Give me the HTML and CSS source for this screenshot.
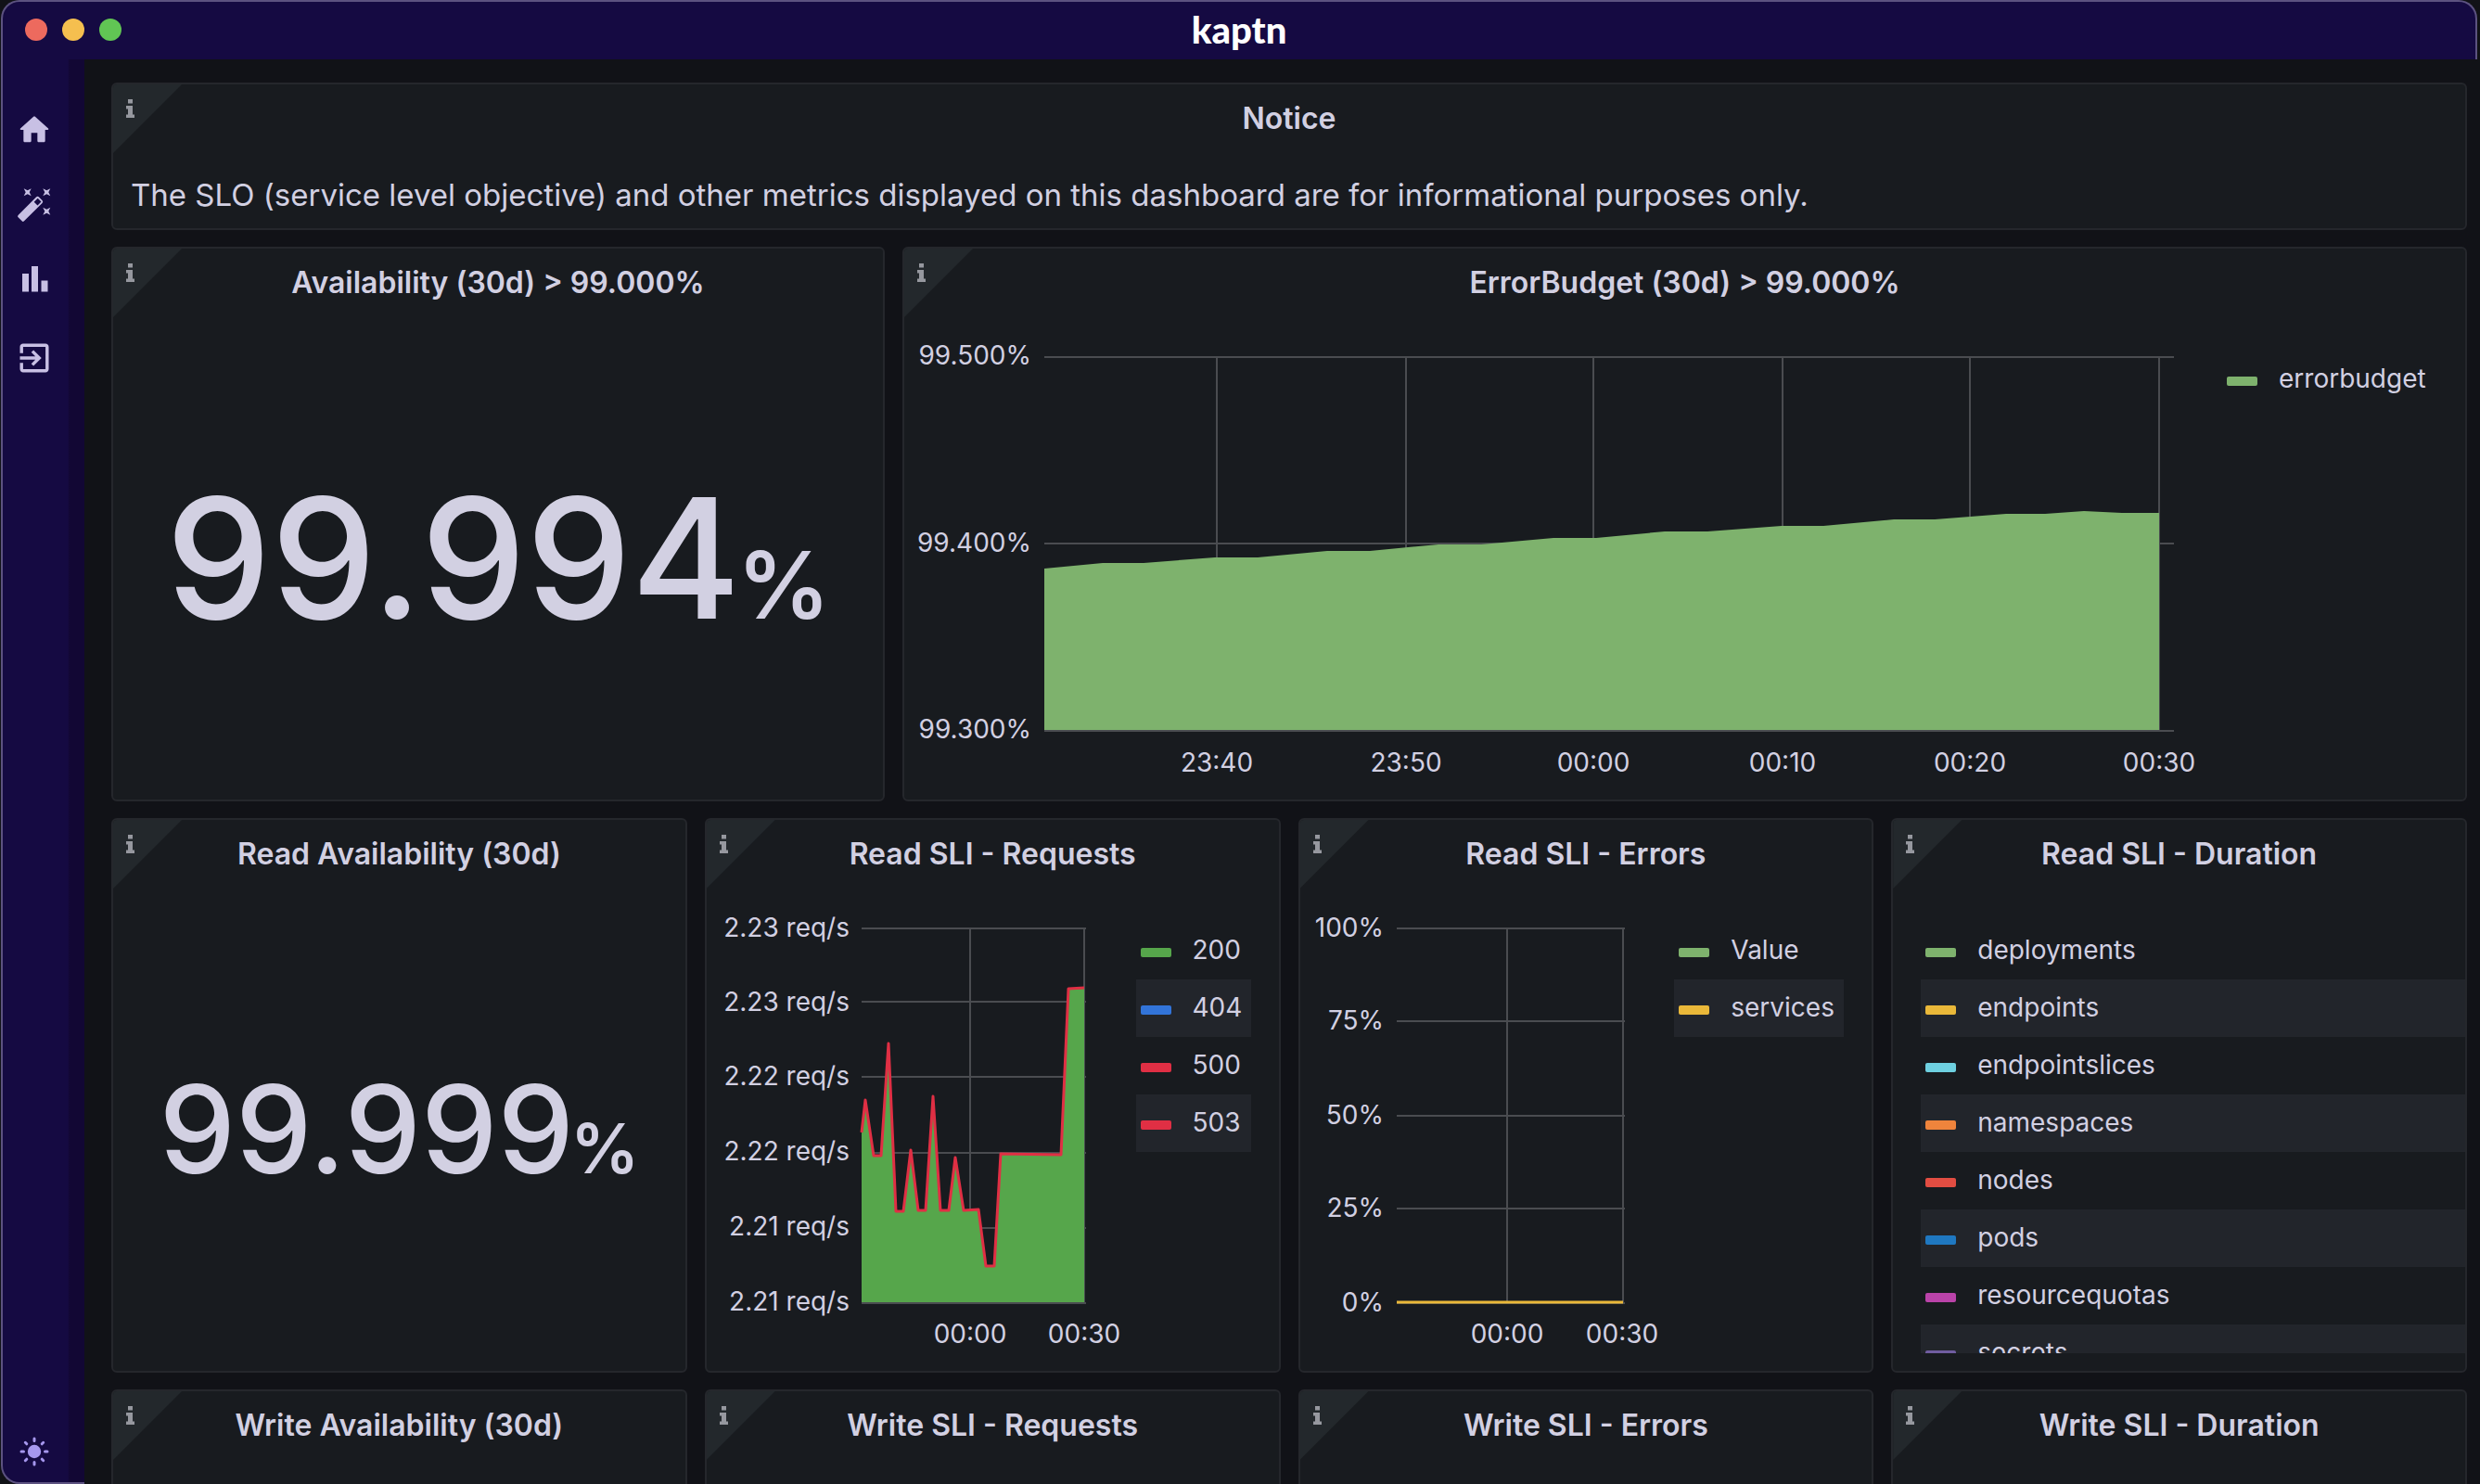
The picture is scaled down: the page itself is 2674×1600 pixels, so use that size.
FILE: index.html
```html
<!DOCTYPE html>
<html lang="en">
<head>
<meta charset="utf-8">
<meta name="viewport" content="width=device-width, initial-scale=1">
<title>kaptn</title>
<link rel="stylesheet" href="styles.css">
</head>
<body>
<svg class="sprite" aria-hidden="true">
  <symbol id="info" viewBox="0 0 9 20"><path d="M2 0h5v4.500H2zM0 7h7v9.500h2V20H0v-3.500h2v-6H0z"/></symbol>
</svg>
<div class="window">
  <header class="titlebar">
    <div class="lights">
      <button class="light close" aria-label="Close"></button>
      <button class="light minimize" aria-label="Minimize"></button>
      <button class="light zoom" aria-label="Zoom"></button>
    </div>
    <h1 class="brand">kaptn</h1>
  </header>

  <div class="frame">
    <nav class="sidebar" aria-label="Main">
      <div class="nav-links">
        <a class="nav-link" href="#home" aria-label="Home">
          <svg viewBox="0 0 24 24"><path d="M10 19v-5h4v5c0 .55.45 1 1 1h3c.55 0 1-.45 1-1v-7h1.700c.46 0 .68-.57.33-.87L12.670 3.600c-.38-.34-.96-.34-1.340 0l-8.360 7.530c-.34.3-.13.87.33.87H5v7c0 .55.45 1 1 1h3c.55 0 1-.45 1-1z"/></svg>
        </a>
        <a class="nav-link" href="#deploy" aria-label="Magic wand">
          <svg viewBox="0 2 40 40">
            <path fill-rule="evenodd" d="M22 12.500q1.500-1.500 3 0l3.500 3.500q1.500 1.500 0 3L9 38.300q-1.200 1.200-2.400 0l-4-4q-1.200-1.200 0-2.400zM23.700 13.700l-4 4 3.800 3.800 4-4z"/>
            <path d="M8.700 3.200l4 2 4-2-2 4 2 4-4-2-4 2 2-4zM29.300 3.200l4 2 4-2-2 4 2 4-4-2-4 2 2-4zM29.300 23.700l4 2 4-2-2 4 2 4-4-2-4 2 2-4z"/>
          </svg>
        </a>
        <a class="nav-link" href="#metrics" aria-label="Metrics">
          <svg viewBox="0 0 40 40"><path d="M7 11h7v19.500H7zM17 3h7v27.500h-7zM27.500 18.500h7v12h-7z"/></svg>
        </a>
        <a class="nav-link" href="#exit" aria-label="Exit">
          <svg viewBox="0.400 0.400 23.200 23.200"><path d="M10.090 15.590 11.500 17l5-5-5-5-1.410 1.410L12.670 11H3v2h9.670l-2.580 2.590zM19 3H5c-1.110 0-2 .9-2 2v4h2V5h14v14H5v-4H3v4c0 1.100.89 2 2 2h14c1.100 0 2-.9 2-2V5c0-1.100-.9-2-2-2z"/></svg>
        </a>
      </div>
      <button class="theme" aria-label="Toggle theme">
        <svg viewBox="-20 -20 40 40">
          <circle r="7.200"/>
          <path d="M0-14v2.500M0 11.500V14M-14 0h2.500M11.500 0H14M-9.700-9.700l1.500 1.500M8.200 8.200l1.500 1.500M-9.700 9.700l1.500-1.500M8.200-8.200l1.500-1.500"/>
        </svg>
      </button>
    </nav>

    <main class="dashboard">
      <section class="panel span-full notice">
        <span class="corner"><svg><use href="#info"/></svg></span>
        <h2 class="title">Notice</h2>
        <p class="notice-text">The SLO (service level objective) and other metrics displayed on this dashboard are for informational purposes only.</p>
      </section>

      <section class="panel span-third">
        <span class="corner"><svg><use href="#info"/></svg></span>
        <h2 class="title">Availability (30d) &gt; 99.000%</h2>
        <div class="body stat stat-large">99.994<span class="unit">%</span></div>
      </section>

      <section class="panel span-two-thirds">
        <span class="corner"><svg><use href="#info"/></svg></span>
        <h2 class="title">ErrorBudget (30d) &gt; 99.000%</h2>
        <div class="body">
          <svg class="chart" viewBox="0 0 1410 518" preserveAspectRatio="xMinYMin">
            <path class="grid" d="M151 41H1369M151 242H1369M151 444H1369M337 41V444M541 41V444M743 41V444M947 41V444M1149 41V444M1353 41V444"/>
            <path class="area budget" d="M151 269L214 263H258L335 257H381L456 250H502L576 243H622L700 236H746L820 229H866L946 223H991L1067 216H1111L1188 210H1230L1272 207L1313 209H1353V443H151z"/>
            <g class="y-labels">
              <text x="137" y="49">99.500%</text><text x="137" y="251">99.400%</text><text x="137" y="452">99.300%</text>
            </g>
            <g class="x-labels">
              <text x="337" y="488">23:40</text><text x="541" y="488">23:50</text><text x="743" y="488">00:00</text><text x="947" y="488">00:10</text><text x="1149" y="488">00:20</text><text x="1353" y="488">00:30</text>
            </g>
          </svg>
          <ul class="legend legend-budget">
            <li><i class="swatch green"></i>errorbudget</li>
          </ul>
        </div>
      </section>

      <section class="panel">
        <span class="corner"><svg><use href="#info"/></svg></span>
        <h2 class="title">Read Availability (30d)</h2>
        <div class="body stat">99.999<span class="unit">%</span></div>
      </section>

      <section class="panel">
        <span class="corner"><svg><use href="#info"/></svg></span>
        <h2 class="title">Read SLI - Requests</h2>
        <div class="body">
          <svg class="chart" viewBox="0 0 460 518" preserveAspectRatio="xMinYMin">
            <path class="grid" d="M167 41H409M167 120H409M167 201H409M167 283H409M167 364H409M167 445H409M284 41V445M407 41V445"/>
            <path class="area requests" d="M167 261L171 226L180 286H188L196 165L204 346H212L220 280L228 345H236L244 222L252 345H261L268 288L277 345L293 344L301 405H310L317 284L382 285L390 106L407 105V444H167z"/>
            <path class="line errors" d="M167 261L171 226L180 286H188L196 165L204 346H212L220 280L228 345H236L244 222L252 345H261L268 288L277 345L293 344L301 405H310L317 284L382 285L390 106L407 105"/>
            <g class="y-labels">
              <text x="154" y="50">2.23 req/s</text><text x="154" y="130">2.23 req/s</text><text x="154" y="210">2.22 req/s</text><text x="154" y="291">2.22 req/s</text><text x="154" y="372">2.21 req/s</text><text x="154" y="453">2.21 req/s</text>
            </g>
            <g class="x-labels"><text x="284" y="488">00:00</text><text x="407" y="488">00:30</text></g>
          </svg>
          <ul class="legend legend-codes">
            <li><i class="swatch leaf"></i>200</li>
            <li><i class="swatch blue"></i>404</li>
            <li><i class="swatch crimson"></i>500</li>
            <li><i class="swatch crimson"></i>503</li>
          </ul>
        </div>
      </section>

      <section class="panel">
        <span class="corner"><svg><use href="#info"/></svg></span>
        <h2 class="title">Read SLI - Errors</h2>
        <div class="body">
          <svg class="chart" viewBox="0 0 400 518" preserveAspectRatio="xMinYMin">
            <path class="grid" d="M104 41H350M104 141H350M104 243H350M104 343H350M104 445H350M223 41V445M348 41V445"/>
            <path class="line services" d="M104 444H348"/>
            <g class="y-labels">
              <text x="90" y="50">100%</text><text x="90" y="150">75%</text><text x="90" y="252">50%</text><text x="90" y="352">25%</text><text x="90" y="454">0%</text>
            </g>
            <g class="x-labels"><text x="223" y="488">00:00</text><text x="347" y="488">00:30</text></g>
          </svg>
          <ul class="legend legend-services">
            <li><i class="swatch green"></i>Value</li>
            <li><i class="swatch yellow"></i>services</li>
          </ul>
        </div>
      </section>

      <section class="panel">
        <span class="corner"><svg><use href="#info"/></svg></span>
        <h2 class="title">Read SLI - Duration</h2>
        <div class="body">
          <ul class="legend legend-full">
            <li><i class="swatch green"></i>deployments</li>
            <li><i class="swatch yellow"></i>endpoints</li>
            <li><i class="swatch cyan"></i>endpointslices</li>
            <li><i class="swatch orange"></i>namespaces</li>
            <li><i class="swatch red"></i>nodes</li>
            <li><i class="swatch azure"></i>pods</li>
            <li><i class="swatch magenta"></i>resourcequotas</li>
            <li><i class="swatch violet"></i>secrets</li>
          </ul>
        </div>
      </section>

      <section class="panel">
        <span class="corner"><svg><use href="#info"/></svg></span>
        <h2 class="title">Write Availability (30d)</h2>
      </section>
      <section class="panel">
        <span class="corner"><svg><use href="#info"/></svg></span>
        <h2 class="title">Write SLI - Requests</h2>
      </section>
      <section class="panel">
        <span class="corner"><svg><use href="#info"/></svg></span>
        <h2 class="title">Write SLI - Errors</h2>
      </section>
      <section class="panel">
        <span class="corner"><svg><use href="#info"/></svg></span>
        <h2 class="title">Write SLI - Duration</h2>
      </section>
    </main>
  </div>
</div>
</body>
</html>
```
FILE: styles.css
```css
:root {
  --navy: #150a42;
  --edge: #5c5280;
  --canvas: #111217;
  --panel: #181b1f;
  --line: #25272c;
  --text: #d2d0e2;
}

* { box-sizing: border-box; }

body {
  margin: 0;
  background: var(--canvas);
  color: var(--text);
  font-family: Inter, "Liberation Sans", sans-serif;
  font-size: 28px;
}

h1, h2, p, ul { margin: 0; padding: 0; }

button { padding: 0; border: 0; background: none; }

.sprite { display: none; }

.window {
  display: flex;
  flex-direction: column;
  height: 100vh;
  overflow: hidden;
}

/* Title bar */
.titlebar {
  display: grid;
  grid-template-columns: 1fr auto 1fr;
  align-items: center;
  flex: none;
  height: 64px;
  margin: 0 3px 0 1px;
  padding: 0 24px 2px;
  border: 2px solid var(--edge);
  border-bottom: 0;
  border-radius: 20px 20px 0 0;
  background: var(--navy);
}

.lights { display: flex; gap: 16px; }

.light {
  width: 24px;
  height: 24px;
  border-radius: 50%;
}

.close { background: #ed6a5e; }
.minimize { background: #f5bf4f; }
.zoom { background: #61c554; }

.brand {
  color: #fff;
  font-family: Lato, sans-serif;
  font-size: 40px;
  font-weight: 900;
  line-height: 60px;
}

/* Sidebar */
.frame {
  display: flex;
  flex: 1;
  min-height: 0;
}

.sidebar {
  display: flex;
  flex-direction: column;
  justify-content: space-between;
  flex: none;
  width: 90px;
  margin-left: 1px;
  padding: 56px 0 13px 14px;
  border: 2px solid var(--edge);
  border-width: 0 0 2px 2px;
  border-bottom-left-radius: 20px;
  background: linear-gradient(to right, var(--navy) 70px, #120734 72px);
}

.nav-links {
  display: flex;
  flex-direction: column;
  gap: 42px;
}

.nav-link, .theme { width: 40px; height: 40px; }

.nav-link svg, .theme svg {
  display: block;
  width: 40px;
  height: 40px;
}

.nav-link svg { fill: #c8c0e4; }

.theme svg {
  fill: #a697ee;
  stroke: none;
}

.theme path {
  fill: none;
  stroke: #a697ee;
  stroke-width: 3;
  stroke-linecap: round;
}

/* Dashboard grid */
.dashboard {
  display: grid;
  grid-template-columns: repeat(12, 1fr);
  grid-template-rows: 159px;
  grid-auto-rows: 598px;
  gap: 18px 19px;
  flex: 1;
  min-width: 0;
  padding: 25px 14px 0 29px;
  overflow: hidden;
}

.panel {
  position: relative;
  display: flex;
  flex-direction: column;
  grid-column: span 3;
  min-width: 0;
  border: 2px solid var(--line);
  border-radius: 6px;
  background: var(--panel);
  overflow: hidden;
}

.span-full { grid-column: 1 / -1; }
.span-third { grid-column: span 4; }
.span-two-thirds { grid-column: span 8; }

.corner {
  position: absolute;
  top: 0;
  left: 0;
  width: 74px;
  height: 74px;
  padding: 16px 0 0 14px;
  background: #23282c;
  clip-path: polygon(0 0, 100% 0, 0 100%);
}

.corner svg {
  display: block;
  width: 9px;
  height: 20px;
  fill: #96989f;
}

.title {
  flex: none;
  padding-bottom: 2px;
  font-size: 32px;
  font-weight: 600;
  line-height: 74px;
  text-align: center;
}

.notice-text {
  padding: 17px 19px 0;
  font-size: 33px;
  line-height: 52px;
}

.body {
  display: flex;
  flex: 1;
  min-height: 0;
}

/* Single stats */
.stat {
  align-items: baseline;
  justify-content: center;
  padding-top: 178px;
  font-size: 131px;
  font-weight: 500;
  line-height: 160px;
}

.stat .unit {
  margin-left: -4px;
  font-size: 74px;
  font-weight: 600;
}

.stat-large { font-size: 180px; }

.stat-large .unit { font-size: 100px; }

/* Charts */
.chart {
  flex: 1;
  min-width: 0;
  height: 518px;
}

.grid {
  fill: none;
  stroke: #4a4c50;
  stroke-width: 2;
}

.chart text { fill: var(--text); }
.y-labels { text-anchor: end; }
.x-labels { text-anchor: middle; }

.budget { fill: #7eb26d; }
.requests { fill: #56a64b; }

.line {
  fill: none;
  stroke-width: 3;
  stroke-linejoin: round;
}

.errors { stroke: #e02f44; }
.services { stroke: #eab839; }

/* Legends */
.legend {
  flex: none;
  margin: 34px 30px 0 0;
  list-style: none;
  line-height: 61px;
}

.legend li {
  display: flex;
  align-items: center;
  gap: 23px;
  padding: 0 0 1px 5px;
}

.legend li:nth-child(even) { background: #22252b; }

.legend-budget { width: 240px; padding-left: 8px; }
.legend-codes { width: 124px; }
.legend-services { width: 183px; }

.legend-full {
  flex: 1;
  margin: 34px 0 19px 30px;
  overflow: hidden;
}

.swatch {
  flex: none;
  width: 33px;
  height: 10px;
  margin-top: 4px;
  border-radius: 2px;
}

.green { background: #7eb26d; }
.leaf { background: #56a64b; }
.blue { background: #3274d9; }
.crimson { background: #e02f44; }
.yellow { background: #eab839; }
.cyan { background: #6ed0e0; }
.orange { background: #ef843c; }
.red { background: #e24d42; }
.azure { background: #1f78c1; }
.magenta { background: #ba43a9; }
.violet { background: #705da0; }
```
